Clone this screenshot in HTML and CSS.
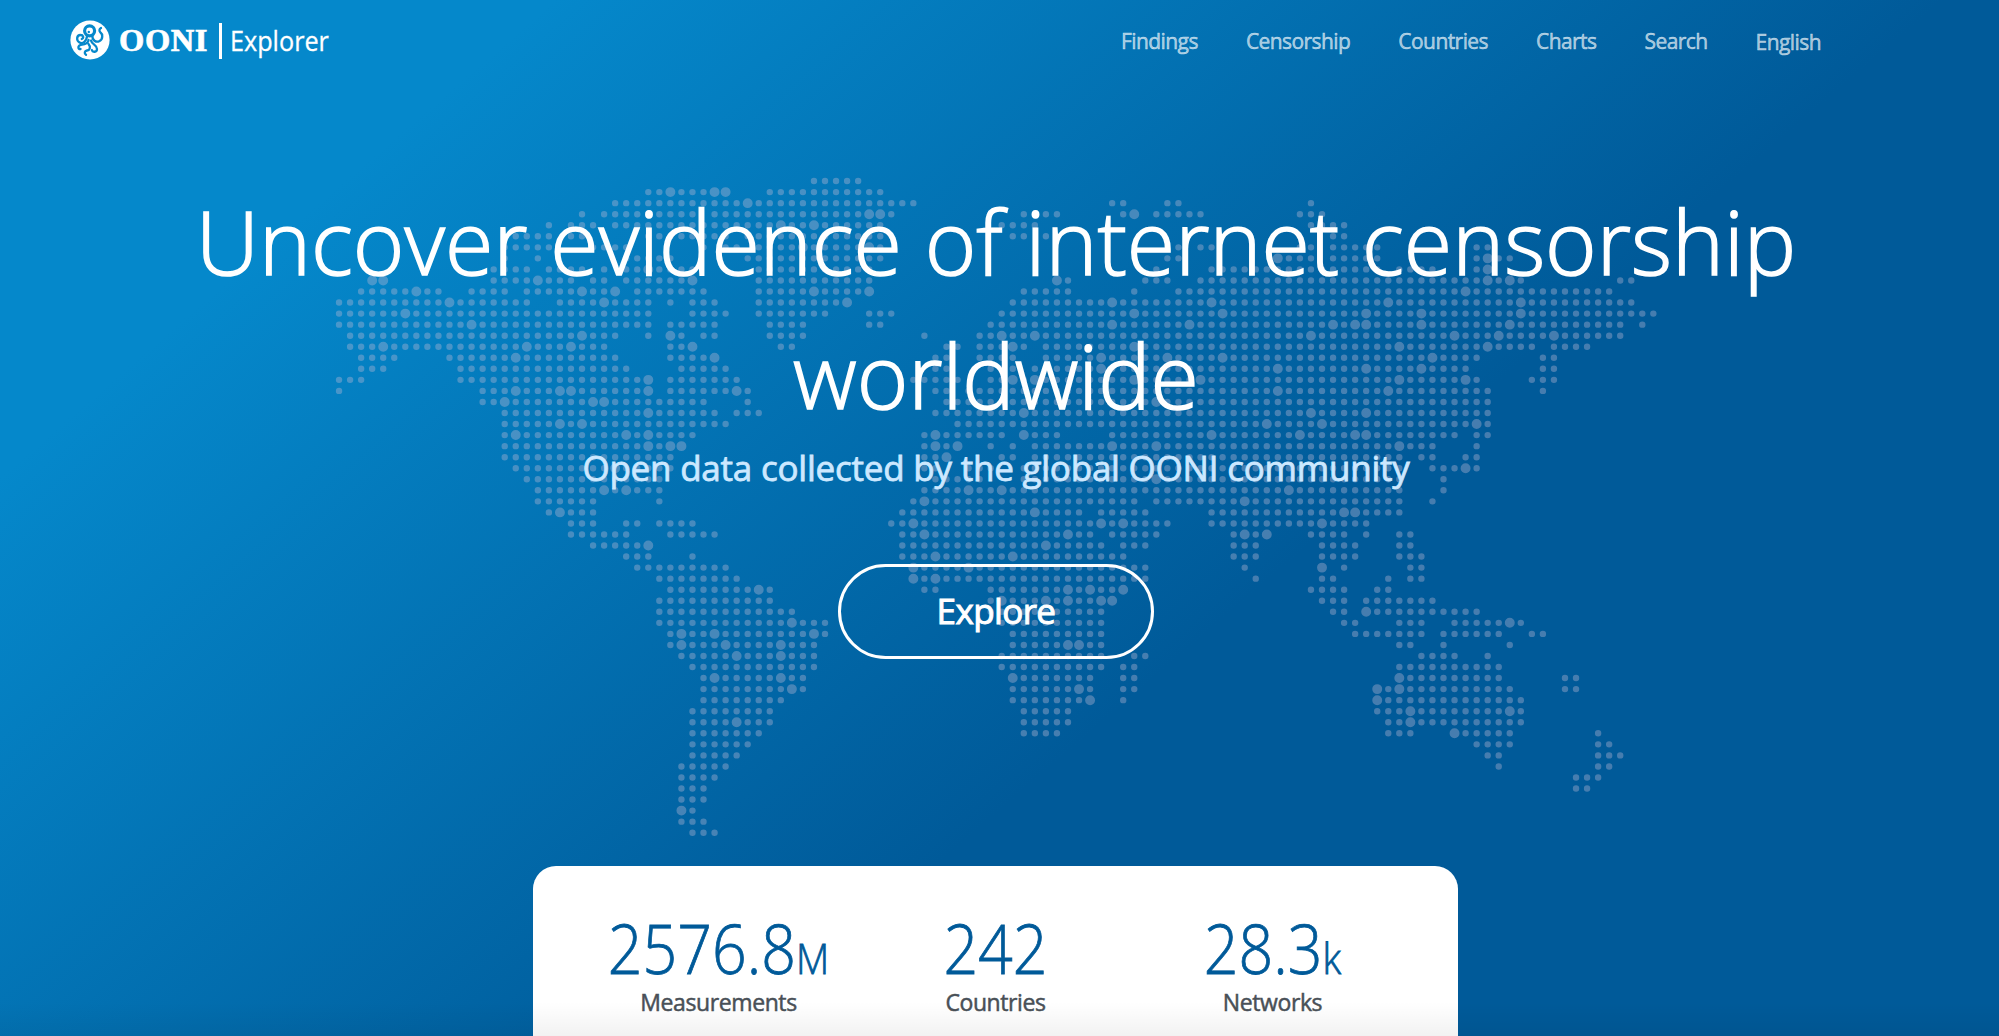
FILE: index.html
```html
<!DOCTYPE html>
<html lang="en">
<head>
<meta charset="utf-8">
<title>OONI Explorer</title>
<link rel="stylesheet" href="styles.css">
</head>
<body>
<div class="page">
  <header class="header">
    <a class="logo">
      <svg class="logo-mark" viewBox="0 0 40 40" aria-hidden="true">
        <circle cx="20" cy="20" r="19.6" fill="#fff"/>
        <circle cx="19.6" cy="10.8" r="5" fill="none" stroke="#0588cb" stroke-width="3.2"/>
        <circle cx="18.8" cy="12" r="1.200" fill="#0588cb"/>
        <g fill="none" stroke="#0588cb" stroke-width="2.3" stroke-linecap="round" stroke-linejoin="round">
          <path d="M17 16.500C16.500 21 13 24.500 9.500 22.500C6 20.500 6.500 15 10.500 15C13.500 15 14 18 11.800 19"/>
          <path d="M22.500 16C22 20 26 23 29.500 21C33.500 18.500 32.500 14 30.500 12.500C29 11.300 29 9 31 8"/>
          <path d="M18.500 20C18.500 24 14 24.500 10.500 25C7.500 26 8 29.500 10.500 29"/>
          <path d="M18.500 24C21 27 20 30 17 30.500C14.500 31 14 33.500 16 34.800"/>
          <path d="M21 20.500C22 25 27 24.500 27 29C27 32.500 22.500 32.500 21.800 30"/>
        </g>
      </svg>
      <span class="logo-name">OONI</span>
      <span class="logo-rule"></span>
      <span class="logo-product">Explorer</span>
    </a>
    <nav class="nav">
      <a>Findings</a>
      <a>Censorship</a>
      <a>Countries</a>
      <a>Charts</a>
      <a>Search</a>
      <a class="nav-lang">English</a>
    </nav>
  </header>
  <main class="hero">
    <svg class="map" viewBox="-1 -1 121 62" aria-hidden="true"></svg>
    <h1 class="title">Uncover evidence of internet censorship worldwide</h1>
    <p class="subtitle">Open data collected by the global OONI community</p>
    <a class="explore">Explore</a>
  </main>
  <section class="stats">
    <div class="stat"><div class="stat-value">2576.8<small>M</small></div><div class="stat-label">Measurements</div></div>
    <div class="stat"><div class="stat-value">242</div><div class="stat-label">Countries</div></div>
    <div class="stat"><div class="stat-value">28.3<small>k</small></div><div class="stat-label">Networks</div></div>
  </section>
</div>
<script src="map.js"></script>
</body>
</html>
```
FILE: map.js
```js
// One entry per map row: column runs, then "|" and the columns with a large dot.
const rows = [
  "43-47",
  "28-35 39-49|30 34 35",
  "25-52 70-71 75-76 88|37",
  "22 24-32 34-50 62-65 71-72 74-78 87-89|48 49 72",
  "19 21-23 25-49 60-63 88-91|40 43",
  "16-19 21-22 24 28-35 37-49 61-62 64 90-91",
  "15-19 23-26 33 35-36 38-49 76 78-79 87-88 90-94 103-104|42 48",
  "15 18 26-30 37-49 75-76 85-88 90-94 103-106|85 104",
  "14-17 19-22 24 26-32 38-48 74 79-94 96-99 103-104|28 104",
  "3-4 14-21 23-24 26-32 38-48 65-66 73-75 78-107 116-117|3 4 18 32 65 104 106",
  "2-9 12-15 17-25 27-33 38-48 62-66 72 76-115|7 22 25 43 48 102",
  "0-17 20-28 30 32-34 38-46 61-117|10 24 46 70 79 95 107",
  "0-28 32-35 38-44 48-50 60-119|6 72 80 93 98 107",
  "0-28 30-34 39-42 48-49 59-116 118|12 70 77 90 92 93 98 106",
  "1-25 28 30-31 33-34 39-42 53 58-116|22 30 60 63 88 101 105 110",
  "1-24 30-32 40-41 55-56 58-62 64-108 110-113|4 17 21 32 61 72 96 104",
  "2-5 10-25 30-34 54-55 58-61 64-103 109-110|16 34 69 75 80 99",
  "2-4 11-26 31-35 54-55 59-61 63-102 109-110|69 85 93 98",
  "0-2 11-28 30-36 52-56 59-103 108-110|28 61 63 72 78 96 102",
  "0 13-28 30-37 54-55 57-104 109|16 20 21 28 36 85 95",
  "13-33 37 55-104|15 23 24 74",
  "15-34 36-38 54-104|28 62 88 93",
  "15-35 56-104|20 22 84 89 103",
  "15-32 53-60 62-65 70-101 103-104|16 26 28 54 62 79 87 92 93",
  "15-31 53-56 59 61 63-99 103|28 30 31 54 56 70 74 96",
  "15-30 53-55 60-61 63-96 98-99 102-103|55",
  "16-30 53-54 57-59 62-96 99-103|25 102",
  "17-29 54-58 62-96 100|74",
  "18-29 53-96 100|24 26 57 60 86",
  "18-23 29 52-72 74-96 99|53 82",
  "19-23 51-67 69-73 79-96|20 63 91 92",
  "21-23 26-27 29-32 50-75 79-93|52 69 71 89",
  "21-26 30-34 51-68 70-74 81-84 88-91 93 96-97|53 66 82 84",
  "23-28 51-69 71-73 81-83 89-92 96-97|28 64",
  "26-28 32 51-71 81-83 89-92 96-98|54 61",
  "27-35 52-73 82 89 91 97-98|52 57 89",
  "29-36 52-73 83 89-90 95 97-98|52 54",
  "30-39 53-54 59-71 88-91 94-95|38 66 68 71",
  "29-39 59-70 89-91 93-99|60 64 66 69 70",
  "29-41 59-69 90-91 93-103|93",
  "29-44 60-69 91-92 96-98 101-107|41 106",
  "30-44 61-69 92-98 100-105 108-109|31 34 43",
  "30-43 61-69 96-97 100 106|31 35 40 66 67",
  "31-43 60-69 72-73 98-101 104|36 40",
  "32-43 60-69 71-72 96-105",
  "33-42 61-68 71-72 96-105 111-112|34 40 61 96",
  "33-42 61-68 71-72 94-106 111-112|41 67 94 96",
  "33-40 61-68 71 94-107|68 94",
  "32-39 62-66 94-107|97 106",
  "32-39 62-66 95-107|36 97",
  "32-38 62-65 95-97 101-106 114|101",
  "32-37 103-106 114-115",
  "32-36 104-105 114-116",
  "31-35 105 114-115",
  "31-34 112-114",
  "31-33 112-113",
  "31-33",
  "31-32|31",
  "31-33",
  "32-34"
];

const map = document.querySelector(".map");
const dot = (x, y) => `M${x} ${y}h0`;
let small = "", large = "";
rows.forEach((row, y) => {
  const [runs, marks = ""] = row.split("|");
  for (const run of runs.split(" ")) {
    const [from, to = from] = run.split("-").map(Number);
    for (let x = from; x <= to; x++) small += dot(x, y);
  }
  for (const x of marks.split(" ").filter(Boolean)) large += dot(x, y);
});
map.innerHTML = `<path class="dots" d="${small}"/><path class="dots dots-large" d="${large}"/>`;
```
FILE: styles.css
```css
* { box-sizing: border-box; }

body {
  margin: 0;
  font-family: "Open Sans", "Noto Sans", sans-serif;
  color: #fff;
}

.page {
  position: relative;
  width: 1999px;
  height: 1036px;
  overflow: hidden;
  display: flex;
  flex-direction: column;
  background: linear-gradient(319.33deg, #005a99 39.35%, #0588cb 82.69%);
}

.page::after {
  content: "";
  position: absolute;
  inset: auto 0 0;
  height: 34px;
  background: linear-gradient(rgba(0, 0, 0, 0), rgba(0, 0, 0, .05));
}

.header {
  height: 88px;
  flex: none;
  display: flex;
  justify-content: space-between;
  padding: 0 178px 0 70px;
}

.logo { display: flex; align-items: center; height: 80px; }
.logo-mark { width: 40px; height: 40px; }
.logo-name {
  margin-left: 9px;
  width: 90px;
  font: bold 32.500px/40px "Liberation Serif", serif;
  letter-spacing: .6px;
  -webkit-text-stroke: .7px;
}
.logo-rule { width: 3px; height: 36px; margin: 2px 8px 0 10px; background: #fff; }
.logo-product {
  font-size: 28px;
  line-height: 40px;
  transform: scaleX(.9);
  transform-origin: left;
  -webkit-text-stroke: .3px;
}

.nav {
  display: flex;
  gap: 48px;
  padding-top: 26px;
  font-size: 21px;
  line-height: 30px;
  letter-spacing: -.57px;
  -webkit-text-stroke: .5px;
  color: rgba(255, 255, 255, .62);
}
.nav-lang { padding-top: 1px; }

.hero {
  position: relative;
  height: 778px;
  flex: none;
  display: flex;
  flex-direction: column;
  align-items: center;
  padding: 86px 7px 0 0;
  text-align: center;
}

.map {
  position: absolute;
  left: 327.700px;
  top: 81.700px;
  width: 1336.400px;
  height: 684.800px;
  opacity: .37;
}
.dots { fill: none; stroke: #bebbd6; stroke-width: .58; stroke-linecap: round; }
.dots-large { stroke-width: .9; }

.title {
  position: relative;
  margin: 0;
  width: 1700px;
  font-size: 88px;
  line-height: 134px;
  font-weight: 300;
  -webkit-text-stroke: 1.5px;
}
.subtitle {
  position: relative;
  margin: -1px 0 0;
  font-size: 35px;
  line-height: 54px;
  letter-spacing: -.22px;
  -webkit-text-stroke: .8px;
  color: #cce8ff;
}
.explore {
  position: relative;
  width: 316px;
  height: 95px;
  margin-top: 69px;
  border: 3px solid #fff;
  border-radius: 48px;
  font-size: 35px;
  line-height: 88px;
  letter-spacing: -.6px;
  -webkit-text-stroke: 1px;
}

.stats {
  width: 925px;
  height: 200px;
  flex: none;
  margin-left: 533px;
  padding: 46px 47px 0;
  display: grid;
  grid-template-columns: repeat(3, 277px);
  background: #fff;
  border-radius: 23px 23px 0 0;
  text-align: center;
}
.stat-value {
  font-size: 68px;
  line-height: 72px;
  height: 73px;
  font-weight: 300;
  white-space: nowrap;
  transform: scaleX(.895);
  -webkit-text-stroke: .8px;
  color: #005a99;
}
.stat-value small { font-size: 43px; line-height: 1; }
.stat-label {
  font-size: 23px;
  line-height: 34px;
  letter-spacing: -.4px;
  -webkit-text-stroke: .5px;
  color: #495057;
}
```
